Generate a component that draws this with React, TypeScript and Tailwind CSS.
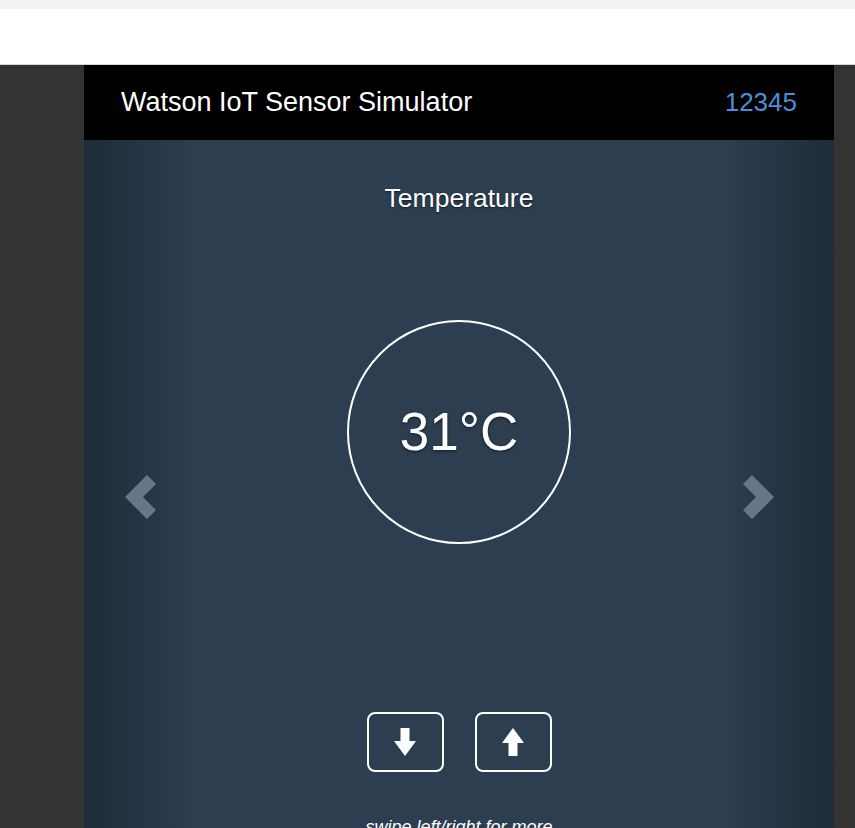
import { useState } from "react";

function Chevron({ dir }: { dir: "left" | "right" }) {
  const pts = dir === "left" ? "0,23 22,1 31,10 18,23 31,36 22,45" : "32,23 10,1 1,10 14,23 1,36 10,45";
  return (
    <svg width="32" height="46" viewBox="0 0 32 46">
      <polygon points={pts} fill="#66778a" />
    </svg>
  );
}

function Arrow({ dir }: { dir: "up" | "down" }) {
  return (
    <svg width="22" height="28" viewBox="0 0 22 28">
      {dir === "down" ? (
        <>
          <rect x="6.5" y="0" width="9" height="14" fill="#fff" />
          <polygon points="0,13 22,13 11,28" fill="#fff" />
        </>
      ) : (
        <>
          <rect x="6.5" y="14" width="9" height="14" fill="#fff" />
          <polygon points="0,15 22,15 11,0" fill="#fff" />
        </>
      )}
    </svg>
  );
}

export default function App() {
  const [temp, setTemp] = useState(31);

  return (
    <div className="min-h-screen bg-[#333333] font-['Liberation_Sans',Arial,sans-serif]">
      <div className="h-[9px] bg-[#f1f3f4]" />
      <div className="h-[56px] border-b border-[#d6d6d6] bg-white" />

      <div className="ml-[84px] w-[750px]">
        <div className="flex h-[75px] items-center justify-between bg-black px-[37px]">
          <span className="text-[27px] text-white">Watson IoT Sensor Simulator</span>
          <span className="text-[26px] text-[#4a90d9]">12345</span>
        </div>

        <div className="relative h-[714px] overflow-hidden bg-[#2c3e50]">
          <div className="absolute inset-y-0 left-0 w-[15%] bg-gradient-to-r from-black/30 to-transparent" />
          <div className="absolute inset-y-0 right-0 w-[15%] bg-gradient-to-l from-black/30 to-transparent" />
          <div className="absolute left-[41px] top-[334px]">
            <Chevron dir="left" />
          </div>
          <div className="absolute right-[60px] top-[334px]">
            <Chevron dir="right" />
          </div>

          <div className="relative flex flex-col items-center pt-[43px] text-white">
            <h2 className="text-[26.5px] leading-[30px] [text-shadow:0_1px_2px_rgba(0,0,0,0.6)]">Temperature</h2>

            <div className="mt-[107px] flex h-[224px] w-[224px] items-center justify-center rounded-full border-2 border-white">
              <span className="text-[53px] [text-shadow:0_1px_3px_rgba(0,0,0,0.6)]">{temp}°C</span>
            </div>

            <div className="mt-[168px] flex gap-[31px]">
              <button
                onClick={() => setTemp((t) => t - 1)}
                className="flex h-[60px] w-[77px] items-center justify-center rounded-[8px] border-2 border-white"
              >
                <Arrow dir="down" />
              </button>
              <button
                onClick={() => setTemp((t) => t + 1)}
                className="flex h-[60px] w-[77px] items-center justify-center rounded-[8px] border-2 border-white"
              >
                <Arrow dir="up" />
              </button>
            </div>

            <p className="mt-[42px] text-[18px] italic">swipe left/right for more</p>
          </div>
        </div>
      </div>
    </div>
  );
}
